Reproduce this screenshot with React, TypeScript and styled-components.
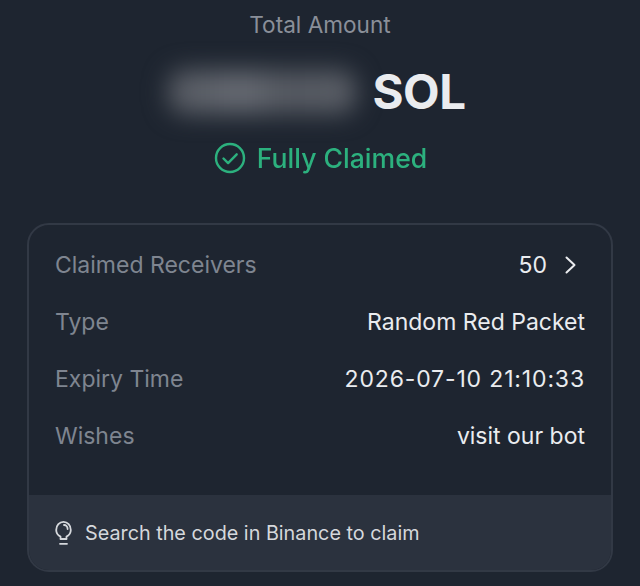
import styled, { createGlobalStyle } from 'styled-components'

const GlobalStyle = createGlobalStyle`
  html, body {
    margin: 0;
    padding: 0;
    background: #1e2530;
    font-family: "Inter", "Liberation Sans", sans-serif;
  }
`

const Page = styled.div`
  width: 640px;
  height: 586px;
  box-sizing: border-box;
  padding: 10px 27px 0 27px;
  overflow: hidden;
  display: flex;
  flex-direction: column;
  align-items: center;
`

const Title = styled.div`
  font-size: 22.6px;
  line-height: 29px;
  color: #8a8f99;
`

const AmountRow = styled.div`
  display: flex;
  align-items: center;
  height: 70px;
  margin-top: 18px;
  padding-right: 6px;
  gap: 16px;
`

const Blurred = styled.div`
  width: 188px;
  height: 44px;
  border-radius: 16px;
  background: linear-gradient(90deg, #555961 0%, #666a72 40%, #555961 62%, #5a5e66 100%);
  filter: blur(12px);
`

const Unit = styled.div`
  font-size: 47.5px;
  line-height: 56px;
  font-weight: 700;
  color: #eaecef;
  letter-spacing: -0.5px;
`

const Status = styled.div`
  display: flex;
  align-items: center;
  gap: 11px;
  margin-top: 13px;
  padding-left: 1px;
  color: #2ebd85;
  font-size: 26.6px;
  line-height: 36px;
  font-weight: 500;
  opacity: 0.92;
`

const Card = styled.div`
  align-self: stretch;
  margin-top: 47px;
  height: 349px;
  box-sizing: border-box;
  border: 2px solid #323945;
  border-radius: 22px;
  overflow: hidden;
  display: flex;
  flex-direction: column;
`

const Rows = styled.div`
  flex: 1;
  box-sizing: border-box;
  padding: 11px 26px 0 26px;
  display: flex;
  flex-direction: column;
`

const Row = styled.div`
  display: flex;
  justify-content: space-between;
  align-items: center;
  height: 57px;
  font-size: 23px;
`

const Label = styled.span`
  color: #7f8590;
`

const Value = styled.span<{ $numeric?: boolean }>`
  color: #eaecef;
  display: flex;
  align-items: center;
  gap: 17px;
  letter-spacing: ${({ $numeric }) => ($numeric ? '0.85px' : '0')};
`

const LinkValue = styled(Value)`
  padding-right: 7px;
`

const Hint = styled.div`
  height: 75px;
  background: #2b323e;
  display: flex;
  align-items: center;
  gap: 12px;
  padding: 0 0 0 25px;
  color: #d5d8dc;
  font-size: 19.8px;
`

export default function App() {
  return (
    <>
      <GlobalStyle />
      <Page>
        <Title>Total Amount</Title>
        <AmountRow>
          <Blurred />
          <Unit>SOL</Unit>
        </AmountRow>
        <Status>
          <svg width="32" height="32" viewBox="0 0 32 32" fill="none" stroke="#2ebd85" strokeWidth="2.4">
            <circle cx="16" cy="16" r="14" />
            <path d="M9.5 16.5l4.600 4.600 8.600-8.800" strokeLinecap="round" strokeLinejoin="round" />
          </svg>
          Fully Claimed
        </Status>
        <Card>
          <Rows>
            <Row>
              <Label>Claimed Receivers</Label>
              <LinkValue>
                50
                <svg width="14" height="18" viewBox="0 0 14 18" fill="none" stroke="#eaecef" strokeWidth="2">
                  <path d="M2.500 1.500L10.500 9L2.500 16.500" strokeLinecap="round" strokeLinejoin="round" />
                </svg>
              </LinkValue>
            </Row>
            <Row>
              <Label>Type</Label>
              <Value>Random Red Packet</Value>
            </Row>
            <Row>
              <Label>Expiry Time</Label>
              <Value $numeric>2026-07-10 21:10:33</Value>
            </Row>
            <Row>
              <Label>Wishes</Label>
              <Value>visit our bot</Value>
            </Row>
          </Rows>
          <Hint>
            <svg width="19" height="26" viewBox="0 0 19 26" fill="none" stroke="#d5d8dc" strokeWidth="1.800">
              <path d="M6.500 19v-2.400C3.800 15.200 2.200 12.700 2.200 9.900 2.200 5.400 5.500 1.800 9.500 1.800s7.300 3.600 7.300 8.100c0 2.800-1.600 5.300-4.300 6.700V19z" strokeLinejoin="round" />
              <path d="M10 5c2 0 3.600 1.800 3.600 4" strokeLinecap="round" />
              <path d="M6 23.800h7" strokeLinecap="round" />
            </svg>
            Search the code in Binance to claim
          </Hint>
        </Card>
      </Page>
    </>
  )
}
